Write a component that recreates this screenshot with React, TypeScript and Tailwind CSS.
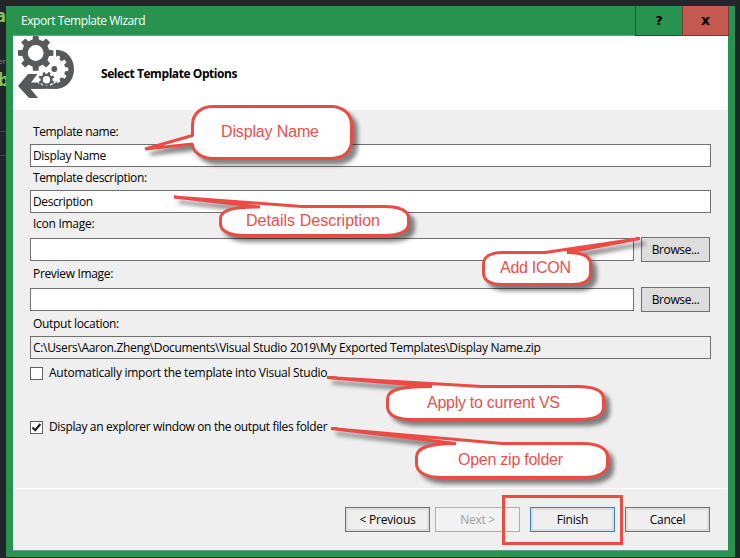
import type { ReactNode } from "react";

function gear(cx: number, cy: number, outer: number, inner: number, teeth: number, phase = 0) {
  const step = (Math.PI * 2) / teeth;
  const pts: string[] = [];
  for (let i = 0; i < teeth; i++) {
    const a = i * step + phase;
    const corners: [number, number][] = [
      [inner, -0.29],
      [outer, -0.2],
      [outer, 0.2],
      [inner, 0.29],
    ];
    for (const [r, k] of corners) {
      pts.push(`${(cx + r * Math.sin(a + k * step)).toFixed(2)},${(cy - r * Math.cos(a + k * step)).toFixed(2)}`);
    }
  }
  return pts.join(" ");
}

function WizardIcon() {
  return (
    <svg className="block" width="62" height="66" viewBox="16 36 62 66">
      <path d="M56 49.7 C67 49.7 74 58.5 74 69.2 C74 80 66.5 88.8 56 88.8 H30.5 L38 98 H29 L18 86 L28 74 H37.5 L31 82.5 H56 Z" fill="#58595b" />
      <polygon points={gear(54.3, 69.2, 14, 11, 10, 0.31)} fill="#fff" />
      <circle cx="54.3" cy="69" r="2.9" fill="#58595b" />
      <circle cx="46.5" cy="79.7" r="9.2" fill="#fff" />
      <path d="M30 83.5 H40 L43 86 H50 L54 83.5 L58 84 V88.8 H30 Z" fill="#58595b" />
      <polygon points={gear(46.5, 79.7, 8, 6, 8, 0.39)} fill="#58595b" />
      <circle cx="46.5" cy="79.7" r="3.7" fill="#fff" />
      <circle cx="35.7" cy="53" r="18.6" fill="#fff" />
      <polygon points={gear(35.7, 53, 17.9, 13.8, 8)} fill="#58595b" />
      <circle cx="35.7" cy="53" r="7.9" fill="#fff" />
    </svg>
  );
}

function Label({ children, className = "" }: { children: ReactNode; className?: string }) {
  return <div className={`flex items-center pl-[3px] ${className}`}>{children}</div>;
}

function Field({ children, className = "bg-white" }: { children?: ReactNode; className?: string }) {
  return (
    <div className={`flex h-[23px] flex-1 items-center border border-[#707070] pl-[2px] ${className}`}>{children}</div>
  );
}

function Browse() {
  return (
    <button className="h-[25px] w-[69px] border border-[#707070] bg-[#ddd] pt-px">
      <span className="tracking-[-0.4px]">Browse...</span>
    </button>
  );
}

function FooterButton({ children, className }: { children: ReactNode; className: string }) {
  return (
    <button className={`flex h-[25px] w-[85px] items-center justify-center border pt-px ${className}`}>{children}</button>
  );
}

type CalloutProps = { d: string; label: string; x: number; y: number; width: number };

function Callout({ d, label, x, y, width }: CalloutProps) {
  return (
    <g>
      <path
        d={d}
        fill="#fff"
        stroke="#ea4b45"
        strokeWidth="3"
        strokeLinejoin="bevel"
        className="[filter:drop-shadow(5px_5px_2px_rgba(0,0,0,0.48))]"
      />
      <text x={x} y={y} textLength={width} fill="#ea504c" fontSize="16">
        {label}
      </text>
    </g>
  );
}

function Annotations() {
  return (
    <svg
      className="pointer-events-none absolute top-0 left-0 font-['Liberation_Sans',sans-serif]"
      width="740"
      height="558"
    >
      <Callout
        d="M192.5 135.5 V125 C192.5 113 202 106.5 213 106.5 H331 C343 106.5 351.5 114 351.5 125 V140 C351.5 152 343 158.5 331 158.5 H213 C202 158.5 192.5 152 192.5 144 L145 149 Z"
        label="Display Name" x={221} y={137} width={98}
      />
      <Callout
        d="M260 207 C230 206.5 220.5 211 220.5 219 V224 C220.5 231 230 235.5 244 235.5 H384 C400 235.5 408.5 231 408.5 224 V218 C408.5 211 400 206.5 384 206.5 H302 L174 197 Z"
        label="Details Description" x={246} y={226} width={134}
      />
      <Callout
        d="M545 252.5 H503 C490 252.5 483.5 257 483.5 264 V273 C483.5 280 490 284.5 503 284.5 H572 C584 284.5 590.5 280 590.5 273 V264 C590.5 257 585 252.5 567 252.5 L640 238.5 Z"
        label="Add ICON" x={500} y={273} width={71}
      />
      <Callout
        d="M432 386.5 C396 386.5 387.5 391 387.5 399 V407 C387.5 415 397 419.5 412 419.5 H580 C595 419.5 603.5 415 603.5 407 V399 C603.5 391 595 386.5 577 386.5 H482 L327 377.5 Z"
        label="Apply to current VS" x={427} y={408} width={133}
      />
      <Callout
        d="M456 443.5 C425 443.5 416.5 449 416.5 457 V464 C416.5 472 426 477.5 442 477.5 H583 C599 477.5 607.5 472 607.5 464 V457 C607.5 449 599 443.5 583 443.5 H502 L331 428.5 Z"
        label="Open zip folder" x={458} y={465} width={105}
      />
      <rect x="503.5" y="496.5" width="118" height="47" fill="none" stroke="#ea4b45" strokeWidth="3" />
    </svg>
  );
}

export default function App() {
  return (
    <div className="relative flex h-[558px] w-[740px] overflow-hidden bg-[#222629] font-['Open_Sans','Noto_Sans',sans-serif] text-[12px] leading-4 text-black">
      <div className="h-full w-[6px] shrink-0 overflow-hidden pt-[5px] text-[#86c35f]">
        <div className="h-[48px] w-4 -translate-x-[5px] font-['DejaVu_Sans_Mono'] text-[18px] leading-[22px] font-bold">a</div>
        <div className="h-[16px] w-4 -translate-x-[2px] text-[8px] text-[#898989]">er</div>
        <div className="h-[62px] w-4 -translate-x-[2px] font-['DejaVu_Sans_Mono'] text-[18px] leading-[22px] font-bold">b</div>
        <div className="h-[25px] border-y border-[#454545]" />
      </div>

      <div className="mt-[6px] h-[551px] w-[729px] shrink-0 bg-[#27934f] pr-[7px]">
        <div className="flex h-[30px] w-[723px] items-stretch">
          <div className="ml-[7px] flex flex-1 items-center border-b border-[#68a581] pl-[8px] text-white">
            <span className="tracking-[-0.45px]">Export Template Wizard</span>
          </div>
          <button className="w-[48px] border border-[#20502f] border-t-transparent font-['DejaVu_Sans'] text-[13px] font-bold">
            ?
          </button>
          <button className="-ml-px w-[47px] border border-[#713c35] border-t-transparent bg-[#c3594f] pb-[3px] font-['DejaVu_Sans'] text-[14px] font-bold">
            x
          </button>
        </div>

        <div className="ml-[7px] flex h-[515px] w-[715px] flex-col border-b border-[#5c9c8c] bg-[#efefef]">
          <div className="flex h-[74px] bg-white pl-[3px]">
            <WizardIcon />
            <h1 className="mt-[30px] ml-[23px] font-bold tracking-[-0.43px]">Select Template Options</h1>
          </div>

          <div className="flex h-[378px] flex-col pl-[17px]">
            <Label className="mt-[11px] h-[23px] pb-[2px]"><span className="tracking-[-0.38px]">Template name:</span></Label>
            <div className="flex w-[681px]"><Field><span className="tracking-[-0.35px]">Display Name</span></Field></div>
            <Label className="h-[23px] pb-[2px]"><span className="tracking-[-0.37px]">Template description:</span></Label>
            <div className="flex w-[681px]"><Field><span className="tracking-[-0.4px]">Description</span></Field></div>
            <Label className="h-[24px] pb-[2px]"><span className="tracking-[-0.27px]">Icon Image:</span></Label>
            <div className="flex w-[680px] items-center gap-[7px]"><Field /><Browse /></div>
            <Label className="h-[25px] pb-[2px]"><span className="tracking-[-0.33px]">Preview Image:</span></Label>
            <div className="flex w-[680px] items-center gap-[7px]"><Field /><Browse /></div>
            <Label className="h-[24px]"><span className="tracking-[-0.3px]">Output location:</span></Label>
            <div className="flex w-[681px]">
              <Field className="bg-[#efefef]">
                <span className="tracking-[-0.32px]">
                  C:\Users\Aaron.Zheng\Documents\Visual Studio 2019\My Exported Templates\Display Name.zip
                </span>
              </Field>
            </div>
            <div className="mt-[6px] flex h-4 items-center gap-[6px]">
              <div className="mt-px h-[13px] w-[13px] border border-[#606060] bg-white" />
              <span className="tracking-[-0.26px]">Automatically import the template into Visual Studio</span>
            </div>
            <div className="mt-[38px] flex h-4 items-center gap-[6px]">
              <div className="mt-px h-[13px] w-[13px] border border-[#606060] bg-white">
                <svg className="block" width="11" height="11" viewBox="0 0 11 11" fill="none" stroke="#222" strokeWidth="2.2">
                  <path d="M1.5 5.5 L4.2 8.2 L9.4 2" />
                </svg>
              </div>
              <span className="tracking-[-0.35px]">Display an explorer window on the output files folder</span>
            </div>
          </div>

          <div className="flex h-[62px] items-start border-t border-white pt-[18px] pl-[332px]">
            <FooterButton className="border-[#707070] tracking-[-0.2px] shadow-[inset_0_0_0_2px_#ddd]">&lt; Previous</FooterButton>
            <FooterButton className="ml-[5px] border-[#adadad] bg-[#f2f2f2] tracking-[-0.3px] text-[#a0a0a0]">Next &gt;</FooterButton>
            <FooterButton className="ml-[10px] border-[#3c7fb1] tracking-[-0.2px] shadow-[inset_0_0_0_2px_#ddd]">Finish</FooterButton>
            <FooterButton className="ml-[10px] border-[#707070] tracking-[-0.25px] shadow-[inset_0_0_0_2px_#ddd]">Cancel</FooterButton>
          </div>
        </div>
      </div>
      <Annotations />
    </div>
  );
}
